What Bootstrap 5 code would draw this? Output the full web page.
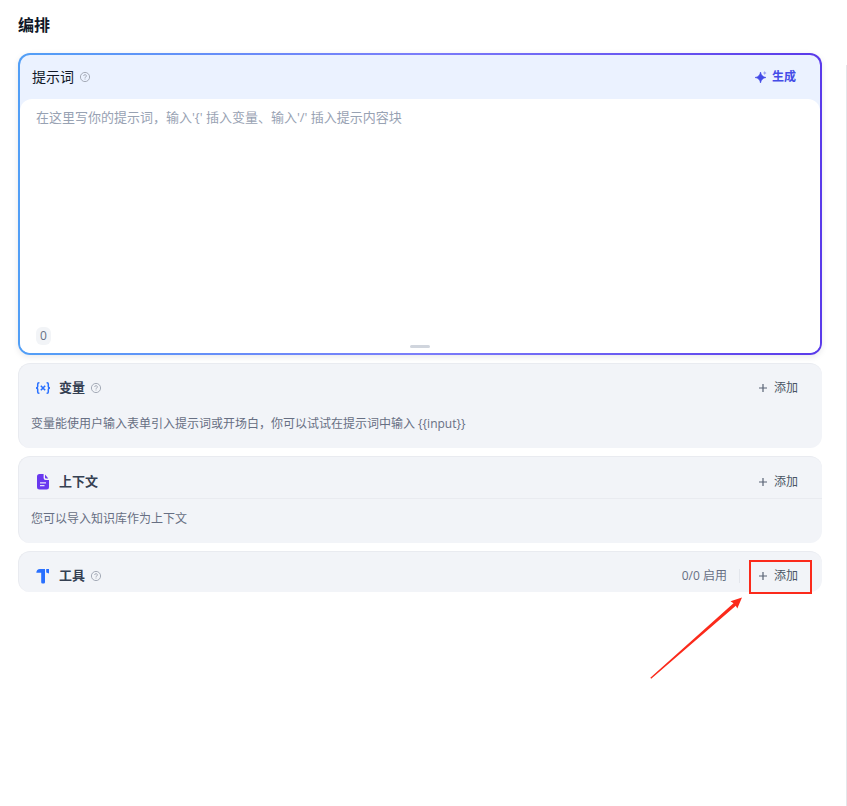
<!DOCTYPE html>
<html lang="zh-CN">
<head>
<meta charset="utf-8">
<meta name="viewport" content="width=device-width, initial-scale=1">
<title>编排</title>
<link href="https://cdn.jsdelivr.net/npm/bootstrap@5.3.0/dist/css/bootstrap.min.css" rel="stylesheet">
<style>
  body { font-family: "Open Sans", "Noto Sans CJK SC", sans-serif; font-size: 12px; line-height: 18px; color: #354052; }
  .page-title { font-size: 16px; line-height: 24px; color: #101828; }
  .page-shell { padding: 13px 0 0 18px; }
  .editor-column { gap: 8px; padding: 16px 24px 0 0; }
  .side-rule { width: 1px; margin-top: 28px; background: #e4e6ea; }
  .prompt-frame { padding: 2px; border-radius: 12px; background: linear-gradient(90deg, #529ff6 0%, #7b7dfa 50%, #5a3aea 100%); box-shadow: 0 2px 6px #10182818; }
  .prompt-inner { border-radius: 10px; background: #ebf2ff; }
  .prompt-head { height: 44px; padding: 0 24px 0 12px; }
  .prompt-label { font-size: 14px; line-height: 20px; color: #101828; }
  .prompt-body { border-radius: 12px 12px 10px 10px; background: #fff; }
  .prompt-text { display: block; height: 224px; padding: 8px 16px; font-size: 13px; line-height: 20px; border: 0; resize: none; background: transparent; outline: 0; }
  .prompt-text::placeholder { color: #98a2b3; opacity: 1; }
  .prompt-foot { display: grid; grid-template-columns: 1fr auto 1fr; height: 30px; padding: 4px 16px 5px; }
  .count-chip { justify-self: start; align-self: start; height: 18px; padding: 0 4px; border-radius: 6px; background: #f2f4f7; color: #667085; }
  .drag-grip { width: 20px; height: 3px; border-radius: 2px; background: #d0d5dd; align-self: end; }
  .panel { border: solid #e9ebf0; border-width: 1px 0 0 1px; border-radius: 12px; background: #f2f4f8; }
  .panel-head { height: 32px; padding: 0 16px; }
  .panel-name { padding-bottom: 2px; font-size: 13px; line-height: 20px; color: #354052; }
  .panel-note { padding-left: 12px; color: #676f83; }
  .panel-vars { padding: 8px 0 15px; }
  .panel-vars .panel-note { padding-top: 11px; }
  .panel-context { padding: 9px 0 15px; }
  .panel-context .panel-head { height: 33px; border-bottom: 1px solid #e9ebf0; }
  .panel-context .panel-note { padding-top: 11px; }
  .panel-tools { padding: 8px 0 0; }
  .link-btn { gap: 6px; padding: 0 8px; height: 24px; border: 0; background: transparent; font-size: 12px; line-height: 18px; color: #495464; }
  .gen-btn { gap: 4px; color: #444ce7; padding: 0; }
  .enabled-count { color: #676f83; }
  .thin-rule { width: 1px; height: 14px; margin: 0 10px 0 12px; background: #e3e6ec; }
  .hi-box { position: absolute; left: -1px; top: -4px; right: -6px; bottom: -6px; border: 2px solid #fb2a1b; pointer-events: none; }
  .hi-arrow { position: absolute; right: 100%; top: 100%; margin: 8px 7px 0 0; pointer-events: none; }
  svg { flex: none; }
</style>
</head>
<body class="bg-white min-vh-100 d-flex flex-column">
<svg class="d-none" aria-hidden="true">
  <symbol id="help" viewBox="0 0 12 12">
    <circle cx="6" cy="6" r="4.6" fill="none" stroke="#a6acb8"/>
    <path d="M4.7 5A1.35 1.25 0 1 1 6.5 6.1Q6 6.3 6 6.9" fill="none" stroke="#a6acb8"/>
    <path d="M5.5 7.6h1v1h-1z" fill="#a6acb8"/>
  </symbol>
  <symbol id="plus" viewBox="0 0 10 10">
    <path d="M5 1v8M1 5h8" fill="none" stroke="#596375" stroke-width="1.2"/>
  </symbol>
</svg>
<main class="page-shell flex-grow-1 d-flex flex-column">
  <h1 class="page-title fw-bold m-0">编排</h1>
  <div class="d-flex flex-grow-1">
    <div class="editor-column d-flex flex-column flex-grow-1">
      <section class="prompt-frame">
        <div class="prompt-inner">
          <div class="prompt-head d-flex align-items-center justify-content-between">
            <div class="d-flex align-items-center gap-1">
              <label class="prompt-label" for="prompt">提示词</label>
              <svg width="14" height="12"><use href="#help"/></svg>
            </div>
            <button type="button" class="link-btn gen-btn d-flex align-items-center fw-bold">
              <svg width="14" height="14" viewBox="0 0 14 14" fill="#444ce7"><path d="M6.5 2Q7.2 6.8 12 7.5Q7.2 8.2 6.5 13Q5.8 8.2 1 7.5Q5.8 6.8 6.5 2Z" stroke="#444ce7" stroke-width=".6"/><path opacity=".5" d="M10.7 1Q11 2.7 12.5 3Q11 3.3 10.7 5Q10.4 3.3 9 3Q10.4 2.7 10.7 1Z"/></svg>
              生成
            </button>
          </div>
          <div class="prompt-body">
            <textarea id="prompt" class="prompt-text w-100" placeholder="在这里写你的提示词，输入'{' 插入变量、输入'/' 插入提示内容块"></textarea>
            <div class="prompt-foot">
              <span class="count-chip">0</span>
              <span class="drag-grip"></span>
            </div>
          </div>
        </div>
      </section>

      <section class="panel panel-vars">
        <div class="panel-head d-flex align-items-center justify-content-between">
          <div class="d-flex align-items-center">
            <svg class="me-2" width="16" height="16" viewBox="0 0 16 16" fill="none" stroke="#2970ff" stroke-width="1.5"><path d="M4.4 2.7H4Q2.7 2.7 2.7 4V6.5Q2.7 8 1 8Q2.7 8 2.7 9.5V12Q2.7 13.3 4 13.3H4.4M11.6 2.7H12Q13.3 2.7 13.3 4V6.5Q13.3 8 15 8Q13.3 8 13.3 9.5V12Q13.3 13.3 12 13.3H11.6M5.8 5.8L10.2 10.2M10.2 5.8L5.8 10.2"/></svg>
            <h2 class="panel-name fw-bold m-0 me-1">变量</h2>
            <svg width="14" height="12"><use href="#help"/></svg>
          </div>
          <button type="button" class="link-btn d-flex align-items-center"><svg width="10" height="10"><use href="#plus"/></svg>添加</button>
        </div>
        <p class="panel-note m-0">变量能使用户输入表单引入提示词或开场白，你可以试试在提示词中输入 {{input}}</p>
      </section>

      <section class="panel panel-context">
        <div class="panel-head d-flex align-items-center justify-content-between">
          <div class="d-flex align-items-center">
            <svg class="me-2" width="16" height="16" viewBox="0 0 16 16"><path fill="#6938ef" d="M4.5 0H8.6V4Q8.6 6 10.6 6H14V13Q14 15.5 11.5 15.5H4.5Q2 15.5 2 13V2.5Q2 0 4.5 0ZM10 .6L13.3 4.5H11Q10 4.5 10 3.5Z"/><path d="M5 8.8h6M5 11.6h4.5" stroke="#fff" stroke-width="1.3" opacity=".85"/></svg>
            <h2 class="panel-name fw-bold m-0">上下文</h2>
          </div>
          <button type="button" class="link-btn d-flex align-items-center"><svg width="10" height="10"><use href="#plus"/></svg>添加</button>
        </div>
        <p class="panel-note m-0">您可以导入知识库作为上下文</p>
      </section>

      <section class="panel panel-tools">
        <div class="panel-head d-flex align-items-center justify-content-between">
          <div class="d-flex align-items-center">
            <svg class="me-2" width="16" height="16" viewBox="0 0 16 16" fill="#2970ff"><path d="M5 1H10V14.2Q10 15.5 8.7 15.5H7.5Q6.2 15.5 6.2 14.2V4.8H1.3Q1.5 1.3 5 1ZM11.2 1H14V5.4L11.2 4.5Z"/></svg>
            <h2 class="panel-name fw-bold m-0 me-1">工具</h2>
            <svg width="14" height="12"><use href="#help"/></svg>
          </div>
          <div class="d-flex align-items-center">
            <span class="enabled-count">0/0 启用</span>
            <span class="thin-rule"></span>
            <div class="position-relative">
              <button type="button" class="link-btn d-flex align-items-center"><svg width="10" height="10"><use href="#plus"/></svg>添加</button>
              <span class="hi-box"></span>
              <svg class="hi-arrow" width="94" height="84" viewBox="0 0 94 84" fill="#fb2a1b"><path d="M1.3 81.7L84.5 7.2L81.5 5.2L93 1.5L88.3 12.6L86.8 9.8L2.2 82.7Z"/></svg>
            </div>
          </div>
        </div>
      </section>
    </div>
    <div class="side-rule"></div>
  </div>
</main>
<script src="https://cdn.jsdelivr.net/npm/bootstrap@5.3.0/dist/js/bootstrap.bundle.min.js"></script>
</body>
</html>
